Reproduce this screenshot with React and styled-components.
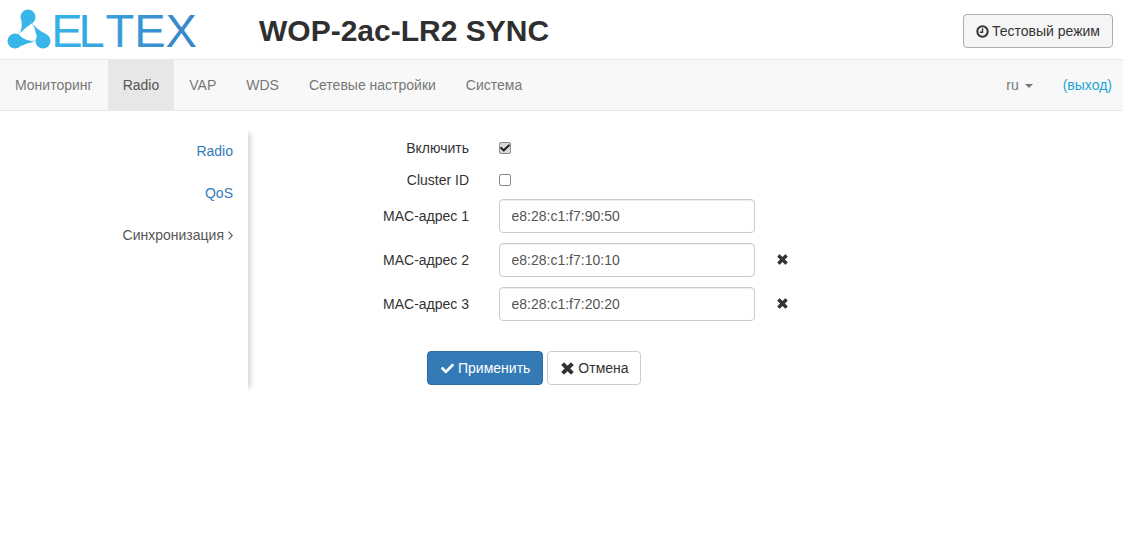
import React from 'react';
import styled, { createGlobalStyle } from 'styled-components';
import { FaCheck } from 'react-icons/fa';

const GlobalStyle = createGlobalStyle`
  html, body {
    margin: 0;
    background: #fff;
    font-family: "Liberation Sans", Arial, sans-serif;
    font-size: 14px;
    line-height: 20px;
    color: #333;
  }
  * {
    box-sizing: border-box;
  }
`;

const Header = styled.header`
  display: flex;
  align-items: center;
  height: 59px;
  padding: 3px 10px 0 0;
`;

const LogoWrap = styled.div`
  width: 259px;
  flex: none;
  line-height: 0;
`;

const Title = styled.h1`
  flex: 1;
  margin: 0;
  font-size: 30px;
  line-height: 34px;
  font-weight: 700;
  color: #2f2f2f;
`;

const ModeButton = styled.button`
  display: inline-flex;
  align-items: center;
  gap: 3px;
  height: 34px;
  padding: 0 12px;
  font: inherit;
  color: #333;
  background: #f5f5f5;
  border: 1px solid #adadad;
  border-radius: 4px;
`;

const Navbar = styled.nav`
  display: flex;
  height: 52px;
  background: #f8f8f8;
  border-top: 1px solid #e7e7e7;
  border-bottom: 1px solid #e7e7e7;
`;

const NavItem = styled.a`
  display: block;
  padding: 15px;
  height: 50px;
  color: ${(p) => (p.$active ? '#555' : '#777')};
  background: ${(p) => (p.$active ? '#e7e7e7' : 'transparent')};
`;

const NavSpacer = styled.div`
  flex: 1;
`;

const Caret = styled.span`
  display: inline-block;
  width: 0;
  height: 0;
  margin-left: 6px;
  vertical-align: middle;
  border-top: 4px solid #777;
  border-left: 4px solid transparent;
  border-right: 4px solid transparent;
`;

const LangItem = styled(NavItem)`
  padding-right: 30px;
`;

const Logout = styled.a`
  display: block;
  padding: 15px 11px 15px 0;
  color: #1ba4d6;
`;

const Main = styled.main`
  display: flex;
  align-items: flex-start;
`;

const Sidebar = styled.aside`
  flex: none;
  width: 248px;
  height: 261px;
  margin-top: 19px;
  padding-top: 1px;
  box-shadow: 5px 0 6px -3px rgba(0, 0, 0, 0.2);
  clip-path: inset(0 -12px 0 0);
`;

const SideItem = styled.a`
  display: flex;
  align-items: center;
  justify-content: flex-end;
  gap: 4px;
  padding: 10px 15px;
  margin-bottom: 2px;
  color: ${(p) => (p.$current ? '#555' : '#337ab7')};
`;

const Form = styled.form`
  padding-top: 21px;
`;

const CheckRow = styled.div`
  display: flex;
  align-items: center;
  height: 32px;
`;

const FieldRow = styled.div`
  display: flex;
  align-items: center;
  height: 34px;
  margin-top: ${(p) => (p.$first ? '3px' : '10px')};
`;

const Label = styled.label`
  width: 221px;
  margin-right: 30px;
  text-align: right;
`;

const Check = styled.span`
  display: flex;
  align-items: center;
  justify-content: center;
  width: 12px;
  height: 12px;
  background: ${(p) => (p.$checked ? '#d8d8d8' : '#fff')};
  border: 1px solid #8a8a8a;
  border-radius: 2px;
  color: #1c1c1c;
  font-size: 10px;
`;

const Input = styled.input`
  width: 256px;
  height: 34px;
  padding: 6px 12px 6px 11.5px;
  font: inherit;
  color: #555;
  background: #fff;
  border: 1px solid #ccc;
  border-radius: 4px;
  box-shadow: inset 0 1px 1px rgba(0, 0, 0, 0.075);
`;

const RemoveButton = styled.span`
  display: flex;
  margin: 0 0 1px 22px;
  color: #333;
`;

const Actions = styled.div`
  display: flex;
  gap: 4px;
  margin: 30px 0 0 179px;
`;

const Button = styled.button`
  display: inline-flex;
  align-items: center;
  gap: 4px;
  height: 34px;
  padding: ${(p) => (p.$primary ? '0 12px 0 13px' : '0 11px 0 13px')};
  font: inherit;
  color: ${(p) => (p.$primary ? '#fff' : '#333')};
  background: ${(p) => (p.$primary ? '#337ab7' : '#fff')};
  border: 1px solid ${(p) => (p.$primary ? '#2e6da4' : '#ccc')};
  border-radius: 4px;
  svg {
    font-size: 13px;
  }
`;

function ClockIcon() {
  return (
    <svg width="13" height="13" viewBox="0 0 13 13" fill="none" stroke="currentColor">
      <circle cx="6.5" cy="6.5" r="5.2" strokeWidth="2" />
      <path d="M6.5 3.2 V7.2 H3.8" strokeWidth="1.4" />
    </svg>
  );
}

function ChevronIcon() {
  return (
    <svg width="5" height="9" viewBox="0 0 5 9" fill="none" stroke="currentColor">
      <path d="M0.7 0.7 L4.3 4.5 L0.7 8.3" strokeWidth="1.1" />
    </svg>
  );
}

function CrossIcon({ size = 11 }) {
  return (
    <svg width={size} height={size} viewBox="0 0 12 12" fill="currentColor">
      <path d="M3.2 0.6 L6 3.4 L8.8 0.6 Q9.2 0.2 9.6 0.6 L11.4 2.4 Q11.8 2.8 11.4 3.2 L8.6 6 L11.4 8.8 Q11.8 9.2 11.4 9.6 L9.6 11.4 Q9.2 11.8 8.8 11.4 L6 8.6 L3.2 11.4 Q2.8 11.8 2.4 11.4 L0.6 9.6 Q0.2 9.2 0.6 8.8 L3.4 6 L0.6 3.2 Q0.2 2.8 0.6 2.4 L2.4 0.6 Q2.8 0.2 3.2 0.6 Z" />
    </svg>
  );
}

function Logo() {
  return (
    <svg width="200" height="52" viewBox="0 5 200 52">
      <defs>
        <linearGradient id="eltexFill" gradientUnits="userSpaceOnUse" x1="55" x2="195" y1="0" y2="0">
          <stop offset="0" stopColor="#35b3e8" />
          <stop offset="1" stopColor="#3a84c6" />
        </linearGradient>
      </defs>
      {/* three nodes with tails running along the sides of the triangle */}
      <path d="M28 17 L43 41 M43 41 L15 41 M15 41 L28 17" fill="none" stroke="#a6dcf4" strokeWidth="1" />
      <g fill="#38b6ea">
        <path d="M21.5 21 Q22.5 27 20.5 33 Q24.5 28 31 24 Z" />
        <path d="M21 37 Q27 41 34 42 Q27 43 21 46 Z" />
        <path d="M37 37 Q35 31 34 25 Q39 31 46 34 Z" />
        <circle cx="28" cy="17" r="7.5" />
        <circle cx="15" cy="41" r="7.5" />
        <circle cx="43" cy="41" r="7.5" />
      </g>
      <text
        x="51.3 78.5 105.5 134.3 165.5"
        y="47"
        fontFamily="Liberation Sans, Arial, sans-serif"
        fontSize="47"
        fill="url(#eltexFill)"
      >
        ELTEX
      </text>
    </svg>
  );
}

const macFields = [
  { label: 'MAC-адрес 1', value: 'e8:28:c1:f7:90:50' },
  { label: 'MAC-адрес 2', value: 'e8:28:c1:f7:10:10', removable: true },
  { label: 'MAC-адрес 3', value: 'e8:28:c1:f7:20:20', removable: true },
];

export default function App() {
  return (
    <>
      <GlobalStyle />
      <Header>
        <LogoWrap>
          <Logo />
        </LogoWrap>
        <Title>WOP-2ac-LR2 SYNC</Title>
        <ModeButton type="button">
          <ClockIcon /> Тестовый режим
        </ModeButton>
      </Header>
      <Navbar>
        <NavItem>Мониторинг</NavItem>
        <NavItem $active>Radio</NavItem>
        <NavItem>VAP</NavItem>
        <NavItem>WDS</NavItem>
        <NavItem>Сетевые настройки</NavItem>
        <NavItem>Система</NavItem>
        <NavSpacer />
        <LangItem>
          ru
          <Caret />
        </LangItem>
        <Logout>(выход)</Logout>
      </Navbar>
      <Main>
        <Sidebar>
          <SideItem>Radio</SideItem>
          <SideItem>QoS</SideItem>
          <SideItem $current>
            Синхронизация <ChevronIcon />
          </SideItem>
        </Sidebar>
        <Form>
          <CheckRow>
            <Label>Включить</Label>
            <Check $checked>
              <FaCheck />
            </Check>
          </CheckRow>
          <CheckRow>
            <Label>Cluster ID</Label>
            <Check />
          </CheckRow>
          {macFields.map((field, i) => (
            <FieldRow key={field.label} $first={i === 0}>
              <Label>{field.label}</Label>
              <Input defaultValue={field.value} />
              {field.removable && (
                <RemoveButton>
                  <CrossIcon />
                </RemoveButton>
              )}
            </FieldRow>
          ))}
          <Actions>
            <Button type="button" $primary>
              <FaCheck /> Применить
            </Button>
            <Button type="button">
              <CrossIcon size={13} /> Отмена
            </Button>
          </Actions>
        </Form>
      </Main>
    </>
  );
}
